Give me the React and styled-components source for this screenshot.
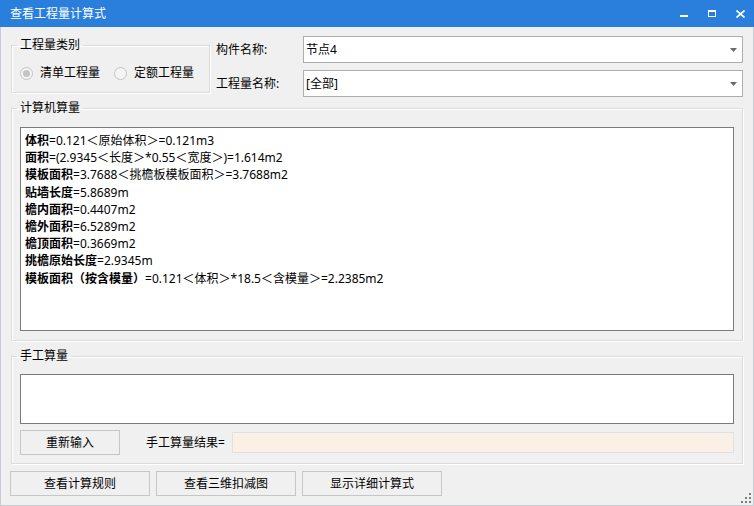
import React from 'react'
import styled, { createGlobalStyle } from 'styled-components'

const Global = createGlobalStyle`
  html, body { margin: 0; padding: 0; background: #f0f0f0; }
  * { box-sizing: border-box; }
  body {
    font-family: "Noto Sans", "Noto Sans CJK SC", sans-serif;
    font-size: 12px;
    color: #000;
  }
`

const Window = styled.div`
  width: 754px;
  height: 506px;
  display: flex;
  flex-direction: column;
  position: relative;
  background: #f0f0f0;
`

const TitleBar = styled.div`
  height: 27px;
  flex: none;
  background: #2b7fdc;
  color: #fff;
  display: flex;
  align-items: center;
  padding-left: 10px;
  font-size: 12px;
`

const Title = styled.div`
  flex: 1;
  line-height: 14px;
`

const CaptionButton = styled.div`
  width: 28px;
  height: 27px;
  display: flex;
  align-items: center;
  justify-content: center;
`

const Body = styled.div`
  flex: 1;
  border: 1px solid #c6ccd6;
  border-top: none;
  padding: 9px 10px 0 10px;
  display: flex;
  flex-direction: column;
`

const TopRow = styled.div`
  display: flex;
  align-items: flex-start;
  gap: 5px;
`

const Group = styled.fieldset`
  margin: ${p => p.$mt || 0}px 0 0 0;
  min-width: 0;
  width: ${p => p.$w ? p.$w + 'px' : 'auto'};
  border: 1px solid #dcdcdc;
  box-shadow: inset 1px 1px 0 #fff, 1px 1px 0 #fff;
  padding: ${p => p.$pt}px 8px ${p => p.$pb}px 8px;
  display: flex;
  flex-direction: column;
`

const Legend = styled.legend`
  padding: 0 3px;
  margin-left: -3px;
  line-height: 14px;
  font-size: 12px;
`

const RadioRow = styled.div`
  display: flex;
  align-items: center;
  height: 14px;
  gap: 14px;
`

const RadioItem = styled.label`
  display: flex;
  align-items: center;
  gap: 7px;
  line-height: 14px;
`

const RadioCircle = styled.span`
  width: 13px;
  height: 13px;
  border-radius: 50%;
  border: 1px solid #c4c4c4;
  background: #f4f4f4;
  display: flex;
  align-items: center;
  justify-content: center;
  &::after {
    content: '';
    width: 7px;
    height: 7px;
    border-radius: 50%;
    background: ${p => (p.$checked ? '#c4c4c4' : 'transparent')};
  }
`

const FormGrid = styled.div`
  flex: 1;
  display: grid;
  grid-template-columns: 88px 440px;
  row-gap: 7px;
  align-items: center;
`

const FieldLabel = styled.div`
  line-height: 14px;
  padding-left: 1px;
`

const Combo = styled.div`
  height: 27px;
  border: 1px solid #adadad;
  background: #fff;
  display: flex;
  align-items: center;
  padding: 0 5px 0 2px;
`

const ComboText = styled.span`
  flex: 1;
  line-height: 14px;
`

const TextBox = styled.div`
  height: ${p => p.$h}px;
  border: 1px solid #7a7a7a;
  background: #fff;
  padding: 4px 4px;
  line-height: 17.2px;
  white-space: pre;
  overflow: hidden;
`

const Line = styled.div``

const Key = styled.b`
  font-weight: bold;
`

const ActionRow = styled.div`
  display: flex;
  align-items: center;
  margin-top: 6px;
`

const Button = styled.div`
  width: ${p => p.$w}px;
  height: 25px;
  border: 1px solid #c6c6c6;
  background: #f0f0f0;
  display: flex;
  align-items: center;
  justify-content: center;
  line-height: 14px;
`

const ResultLabel = styled.span`
  margin-left: 26px;
  margin-right: 7px;
  line-height: 14px;
`

const ResultField = styled.div`
  flex: 1;
  height: 21px;
  border: 1px solid #e0e0e0;
  background: #faf0e6;
`

const ButtonBar = styled.div`
  display: flex;
  gap: 6px;
  margin: 7px 0 0 -1px;
`

const Grip = styled.svg`
  position: absolute;
  right: 3px;
  bottom: 3px;
`

const Arrow = () => (
  <svg width="7" height="4" viewBox="0 0 7 4">
    <polygon points="0,0 7,0 3.5,4" fill="#6a6a6a" />
  </svg>
)

const lines = [
  ['体积', '=0.121＜原始体积＞=0.121m3'],
  ['面积', '=(2.9345＜长度＞*0.55＜宽度＞)=1.614m2'],
  ['模板面积', '=3.7688＜挑檐板模板面积＞=3.7688m2'],
  ['贴墙长度', '=5.8689m'],
  ['檐内面积', '=0.4407m2'],
  ['檐外面积', '=6.5289m2'],
  ['檐顶面积', '=0.3669m2'],
  ['挑檐原始长度', '=2.9345m'],
  ['模板面积（按含模量）', '=0.121＜体积＞*18.5＜含模量＞=2.2385m2'],
]

export default function App() {
  return (
    <Window>
      <Global />
      <TitleBar>
        <Title>查看工程量计算式</Title>
        <CaptionButton>
          <svg width="8" height="8" viewBox="0 0 8 8">
            <rect x="0" y="5" width="8" height="2" fill="#fff" />
          </svg>
        </CaptionButton>
        <CaptionButton>
          <svg width="8" height="7" viewBox="0 0 8 7">
            <rect x="0.5" y="1" width="7" height="5.5" fill="none" stroke="#fff" strokeWidth="1" />
            <rect x="0" y="0" width="8" height="2" fill="#fff" />
          </svg>
        </CaptionButton>
        <CaptionButton>
          <svg width="9" height="8" viewBox="0 0 9 8">
            <path d="M0.5 0.5 L8.5 7.5 M8.5 0.5 L0.5 7.5" stroke="#fff" strokeWidth="1.6" />
          </svg>
        </CaptionButton>
      </TitleBar>
      <Body>
        <TopRow>
          <Group $w={199} $mt={2} $pt={14} $pb={12}>
            <Legend>工程量类别</Legend>
            <RadioRow>
              <RadioItem>
                <RadioCircle $checked />
                清单工程量
              </RadioItem>
              <RadioItem>
                <RadioCircle />
                定额工程量
              </RadioItem>
            </RadioRow>
          </Group>
          <FormGrid>
            <FieldLabel>构件名称:</FieldLabel>
            <Combo>
              <ComboText>节点4</ComboText>
              <Arrow />
            </Combo>
            <FieldLabel>工程量名称:</FieldLabel>
            <Combo>
              <ComboText>[全部]</ComboText>
              <Arrow />
            </Combo>
          </FormGrid>
        </TopRow>
        <Group $mt={4} $pt={12} $pb={9}>
          <Legend>计算机算量</Legend>
          <TextBox $h={204}>
            {lines.map(([k, v]) => (
              <Line key={k + v}>
                <Key>{k}</Key>
                {v}
              </Line>
            ))}
          </TextBox>
        </Group>
        <Group $mt={8} $pt={11} $pb={8}>
          <Legend>手工算量</Legend>
          <TextBox $h={50} />
          <ActionRow>
            <Button $w={100}>重新输入</Button>
            <ResultLabel>手工算量结果=</ResultLabel>
            <ResultField />
          </ActionRow>
        </Group>
        <ButtonBar>
          <Button $w={140}>查看计算规则</Button>
          <Button $w={140}>查看三维扣减图</Button>
          <Button $w={140}>显示详细计算式</Button>
        </ButtonBar>
      </Body>
      <Grip width="10" height="10" viewBox="0 0 10 10">
        <g fill="#7d7d7d">
          <rect x="8" y="0" width="2" height="2" />
          <rect x="4" y="4" width="2" height="2" />
          <rect x="8" y="4" width="2" height="2" />
          <rect x="0" y="8" width="2" height="2" />
          <rect x="4" y="8" width="2" height="2" />
          <rect x="8" y="8" width="2" height="2" />
        </g>
      </Grip>
    </Window>
  )
}
